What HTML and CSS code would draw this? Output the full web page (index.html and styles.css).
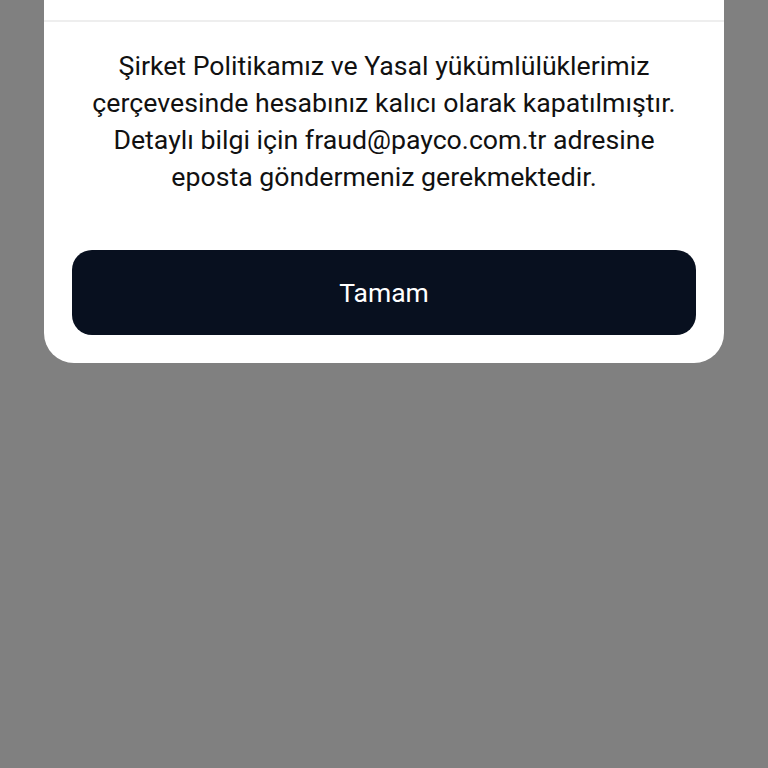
FILE: index.html
```html
<!DOCTYPE html>
<html lang="tr">
<head>
<meta charset="utf-8">
<link rel="stylesheet" href="styles.css">
</head>
<body>
<div class="sheet">
  <div class="sheet-top"></div>
  <div class="sheet-body">
    <p class="message">Şirket Politikamız ve Yasal yükümlülüklerimiz<br>çerçevesinde hesabınız kalıcı olarak kapatılmıştır.<br>Detaylı bilgi için fraud@payco.com.tr adresine<br>eposta göndermeniz gerekmektedir.</p>
    <button class="btn-primary">Tamam</button>
  </div>
</div>
</body>
</html>
```
FILE: styles.css
```css
html, body {
  margin: 0;
  padding: 0;
  background: #808080;
  height: 100%;
}
body {
  font-family: Roboto, "Noto Sans", sans-serif;
}
.sheet {
  margin: 0 44px;
  background: #ffffff;
  border-radius: 0 0 30px 30px;
}
.sheet-top {
  height: 20px;
  border-bottom: 2px solid #eeeeee;
}
.sheet-body {
  padding: 26px 28px 28px;
  display: flex;
  flex-direction: column;
}
.message {
  margin: 0;
  text-align: center;
  font-size: 26.7px;
  line-height: 37px;
  color: #111111;
}
.btn-primary {
  margin-top: 54px;
  height: 85px;
  border: none;
  border-radius: 20px;
  background: #08101f;
  color: #ffffff;
  font-family: Roboto, "Noto Sans", sans-serif;
  font-size: 26.5px;
}
```
